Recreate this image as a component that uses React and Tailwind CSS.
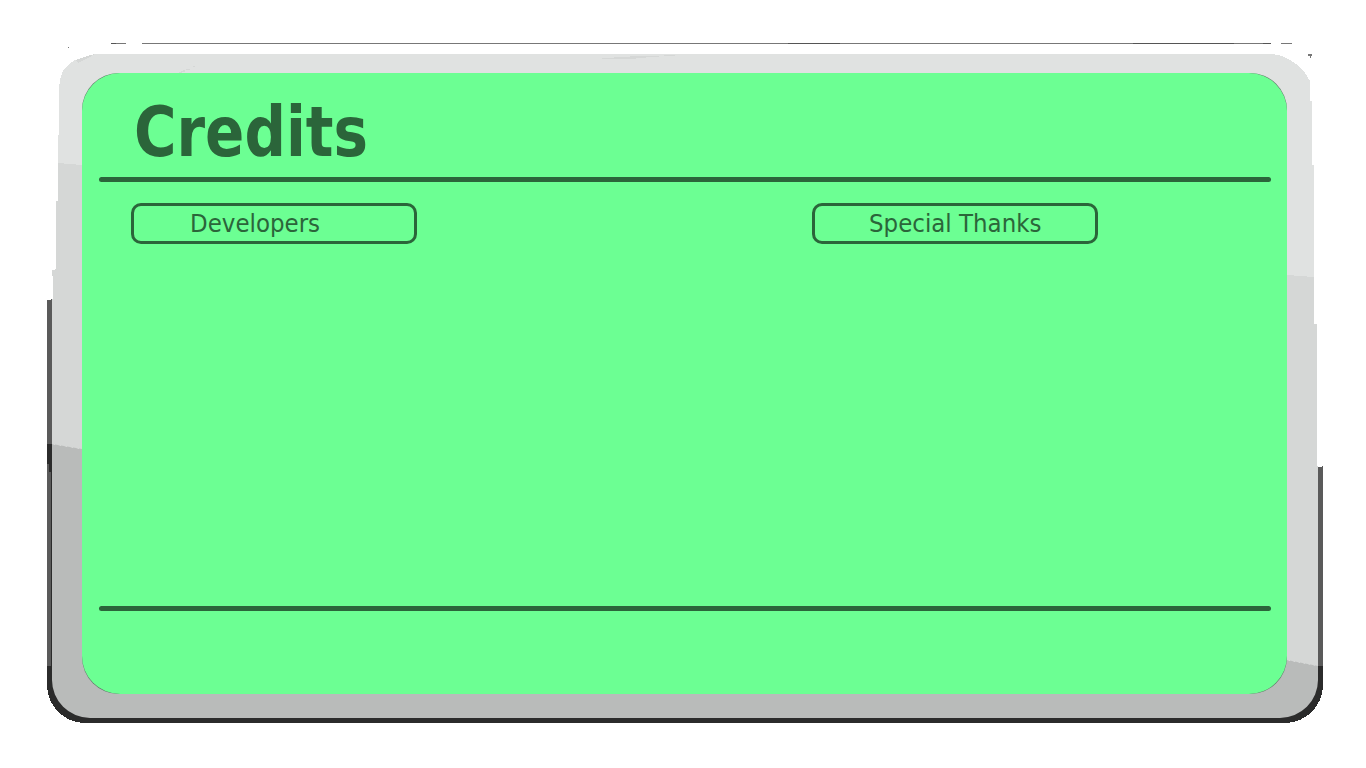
const INK = "text-[#2b653a]";

function Frame() {
  return (
    <svg className="absolute inset-0" width="1366" height="768" viewBox="0 0 1366 768" aria-hidden="true">
      <g shapeRendering="crispEdges">
        <path fill="#2b2b2b" d="M47 444H52V680H1318V666H1323V685A38 38 0 0 1 1285 723H85A38 38 0 0 1 47 685Z" />
        <path fill="#5a5a5a" d="M47 300H51V299H52V444H47ZM1318 467H1322V466H1323V666H1318ZM47 464H49V472H51V666H47Z" />
        <path fill="#777" d="M111 43H126V44H111ZM142 43H1271V44H142ZM1281 43H1292V44H1281ZM68 47H69V48H68ZM1308 54H1312V56H1311V58H1310V56H1308Z" />
        <path fill="#555" d="M111 43H116V44H111ZM788 43H840V44H788ZM1133 43H1234V44H1133ZM1263 43H1271V44H1263Z" />
        <path fill="#e0e2e1" d="M95 54H1272L1282 56L1290 60L1299 66L1305 73L1310 81V101H1312V165H1314V278L1287 275V100H82V165L58 163V135H59V88L60 80L63 71L68 65L75 60L84 57Z" />
        <path fill="#e0e2e1" d="M80 72H1290V110H80Z" />
        <path fill="#d5d7d6" d="M58 163L82 165V449L52 444V299H53V276H52V270H55V269H56V201H58ZM1287 275L1314 277V324H1317V466H1318V666L1287 660Z" />
        <path fill="#d5d7d6" d="M75 60L84 57L95 54L90 57L78 63ZM602 58H636V59H602ZM614 57H646V58H614ZM630 56H659V57H630ZM664 55H675V56H664ZM178 73L184 70L186 71L180 73ZM186 69H190V70H186ZM193 66H195V67H193Z" />
      </g>
      <path fill="#b9bbba" d="M52 444L82 449V650H1287V660L1318 666V680A38 38 0 0 1 1280 718H90A38 38 0 0 1 52 680Z" />
      <rect x="82" y="73" width="1205" height="621" rx="37" fill="#5f7266" />
    </svg>
  );
}

function Section({ children, scale }) {
  return (
    <div className="flex h-[41px] w-[286px] items-center rounded-[10px] border-[3px] border-[#2b653a]">
      <span className={`block origin-left whitespace-nowrap font-['DejaVu_Sans'] text-[24.7px] leading-[35px] ${scale}`}>
        {children}
      </span>
    </div>
  );
}

export default function App() {
  return (
    <main className={`relative h-[768px] w-[1366px] overflow-hidden bg-white pl-[82px] pt-[73px] ${INK}`}>
      <Frame />
      <div className="relative flex h-[621px] w-[1205px] flex-col rounded-[38px] bg-[#6cff93] px-[17px]">
        <header className="h-[104px] pl-[35px] pt-[24px]">
          <h1 className="w-max origin-left scale-x-[0.84] whitespace-nowrap font-['DejaVu_Sans'] text-[69px] font-bold leading-[70px]">
            Credits
          </h1>
        </header>
        <div className="h-[5px] w-[1172px] shrink-0 rounded-full bg-[#2b653a]" />
        <section className="flex h-[424px] shrink-0 gap-[395px] pl-[32px] pt-[21px]">
          <Section scale="ml-[56px] scale-x-[0.93]">Developers</Section>
          <Section scale="ml-[54px] scale-x-[0.93]">Special Thanks</Section>
        </section>
        <div className="h-[5px] w-[1172px] shrink-0 rounded-full bg-[#2b653a]" />
      </div>
    </main>
  );
}
